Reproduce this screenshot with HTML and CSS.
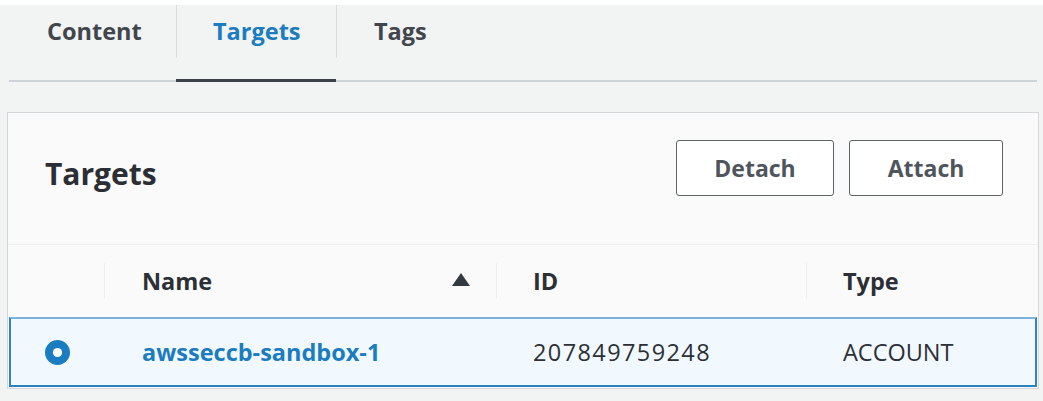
FILE: index.html
```html
<!DOCTYPE html>
<html lang="en">
<head>
<meta charset="utf-8">
<title>Targets</title>
<link rel="stylesheet" href="styles.css">
</head>
<body>
<div class="topstrip"></div>
<nav class="tabs">
  <div class="tab tab-first"><span class="tab-label">Content</span></div>
  <div class="tab tab-sep tab-active"><span class="tab-label">Targets</span></div>
  <div class="tab tab-sep"><span class="tab-label">Tags</span></div>
</nav>
<section class="panel">
  <header class="panel-header">
    <h2 class="panel-title">Targets</h2>
    <div class="actions">
      <button class="btn btn-detach">Detach</button>
      <button class="btn btn-attach">Attach</button>
    </div>
  </header>
  <div class="thead">
    <div class="th th-select"></div>
    <div class="th th-name"><span>Name</span>
      <svg class="sort" width="18" height="13" viewBox="0 0 18 13"><polygon points="9,0 18,13 0,13" fill="#333941"/></svg>
    </div>
    <div class="th th-sep"><span>ID</span></div>
    <div class="th th-sep th-last"><span>Type</span></div>
  </div>
  <div class="row row-selected">
    <div class="td td-select">
      <svg width="25" height="25" viewBox="0 0 25 25"><circle cx="12.5" cy="12.5" r="12.5" fill="#1b7cc1"/><circle cx="12.5" cy="12.5" r="4.6" fill="#ffffff"/></svg>
    </div>
    <div class="td td-name"><a class="link" href="#">awsseccb-sandbox-1</a></div>
    <div class="td td-id">207849759248</div>
    <div class="td">ACCOUNT</div>
  </div>
</section>
</body>
</html>
```
FILE: styles.css
```css
html, body {
  margin: 0;
  padding: 0;
}
body {
  background: #f2f3f3;
  font-family: "Open Sans", "Noto Sans", sans-serif;
  color: #2c3036;
  width: 1043px;
  height: 401px;
  overflow: hidden;
}
.topstrip {
  height: 5px;
  background: #ffffff;
}
.tabs {
  display: flex;
  margin: 0 6px 0 9px;
  height: 75px;
  border-bottom: 2px solid #cdd3d6;
}
.tab {
  box-sizing: border-box;
  height: 75px;
  font-size: 23.5px;
  font-weight: 700;
  color: #41464d;
}
.tab-label {
  display: block;
  line-height: 53px;
}
.tab-first {
  width: 167px;
  padding-left: 38px;
}
.tab-sep {
  background: linear-gradient(#d9dddf, #d9dddf) left top / 1px 53px no-repeat;
}
.tab-active {
  width: 160px;
  padding-left: 37px;
  color: #1b7cc1;
  height: 77px;
  border-bottom: 3px solid #3b4049;
}
.tab-sep:last-child {
  padding-left: 38px;
}
.panel {
  margin: 30px 4px 0 7px;
  height: 277px;
  background: #fafafa;
  border: 1px solid #d3d7d9;
  box-sizing: border-box;
}
.panel-header {
  display: flex;
  align-items: center;
  justify-content: space-between;
  height: 132px;
  box-sizing: border-box;
  padding: 27px 35px 49px 37px;
  border-bottom: 1px solid #eceeef;
}
.panel-title {
  margin: 0;
  padding-top: 12px;
  font-size: 30px;
  font-weight: 700;
  color: #2b2f35;
  line-height: 40px;
}
.actions {
  display: flex;
  gap: 15px;
}
.btn {
  height: 56px;
  box-sizing: border-box;
  border: 1px solid #5d636b;
  border-radius: 3px;
  background: #ffffff;
  font-family: "Open Sans", "Noto Sans", sans-serif;
  font-size: 23px;
  font-weight: 700;
  color: #4f555d;
  padding: 0;
}
.btn-detach {
  width: 158px;
}
.btn-attach {
  width: 154px;
}
.thead {
  display: grid;
  grid-template-columns: 97px 391px 310px 1fr;
  height: 72px;
  align-items: center;
}
.th {
  height: 36px;
  box-sizing: border-box;
  padding-left: 37px;
  display: flex;
  align-items: center;
  font-size: 23.5px;
  font-weight: 700;
  color: #2c3036;
}
.th-select {
  border-right: 1px solid #eceeef;
}
.th-name {
  justify-content: space-between;
  padding-right: 26px;
}
.th-sep {
  border-left: 1px solid #eceeef;
  padding-left: 36px;
}
.sort {
  display: block;
  margin-top: -4px;
}
.row {
  display: grid;
  grid-template-columns: 94px 391px 310px 1fr;
  height: 70px;
  margin: 0 1px;
  align-items: center;
  box-sizing: border-box;
}
.row-selected {
  background: #f1f9fe;
  border: 2px solid #2f82c2;
  border-top-color: #7db3d8;
}
.td {
  padding-left: 37px;
  font-size: 23.5px;
  color: #2c3036;
}
.td-select {
  padding-left: 34px;
  display: flex;
  align-items: center;
}
.td-select svg {
  display: block;
}
.td-id {
  letter-spacing: 1.4px;
}
.link {
  color: #1b7cc1;
  font-weight: 700;
  text-decoration: none;
}
```
